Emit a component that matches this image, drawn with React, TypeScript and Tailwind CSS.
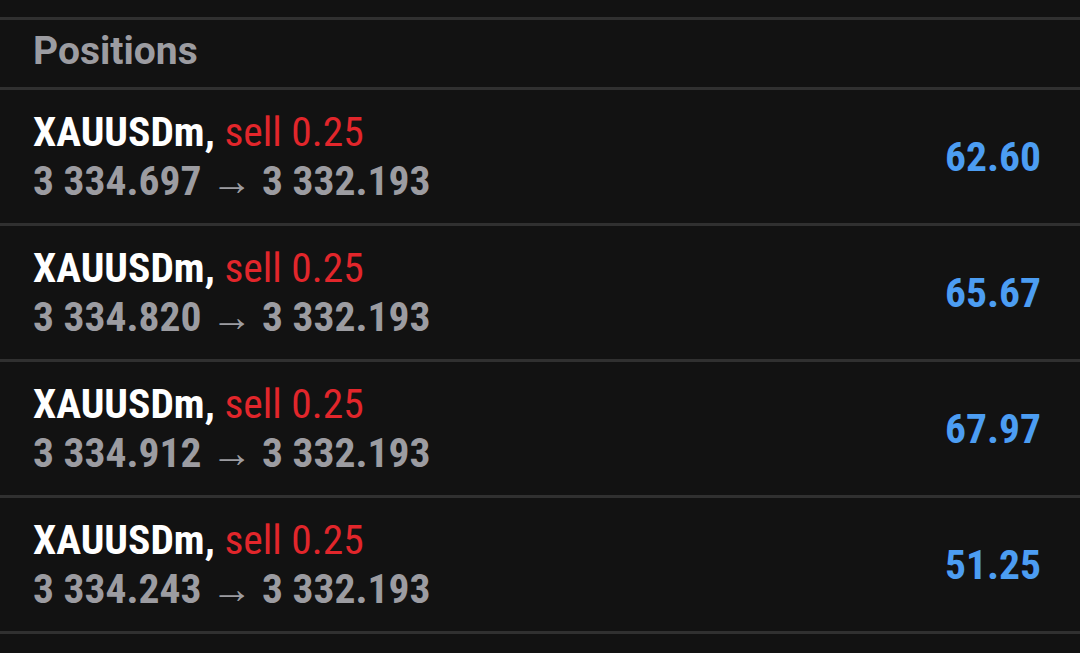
import React from 'react';

const rows = [
  { open: '3 334.697', value: '62.60' },
  { open: '3 334.820', value: '65.67' },
  { open: '3 334.912', value: '67.97' },
  { open: '3 334.243', value: '51.25' },
];

const cond = { fontFamily: '"Roboto Condensed", Roboto, "Liberation Sans", sans-serif', fontStretch: 'condensed' as const };

export default function App() {
  return (
    <div className="w-[1080px] h-[653px] bg-[#121212] overflow-hidden">
      <div className="h-[17px]" />
      <div className="h-[3px] bg-[#303030]" />

      {/* header */}
      <div className="h-[67px] flex items-center pl-[33px] pb-[4px]">
        <span className="text-[39px] font-bold text-[#9c9ca1] leading-none" style={{ fontFamily: 'Roboto, "Liberation Sans", sans-serif' }}>
          Positions
        </span>
      </div>
      <div className="h-[3px] bg-[#303030]" />

      {rows.map((r) => (
        <div key={r.open}>
          <div className="h-[133px] flex items-center justify-between pl-[33px] pr-[39px]" style={cond}>
            <div className="flex flex-col text-[41.5px] leading-[49px] font-bold pb-[1px]">
              <div>
                <span className="text-white">XAUUSDm, </span>
                <span className="text-[#e2262b] font-normal">sell 0.25</span>
              </div>
              <div className="text-[#9c9ca1]">
                {r.open} <span className="font-normal">→</span> 3 332.193
              </div>
            </div>
            <div className="text-[41.5px] font-bold text-[#4c9df2] leading-none">{r.value}</div>
          </div>
          <div className="h-[3px] bg-[#303030]" />
        </div>
      ))}
    </div>
  );
}
